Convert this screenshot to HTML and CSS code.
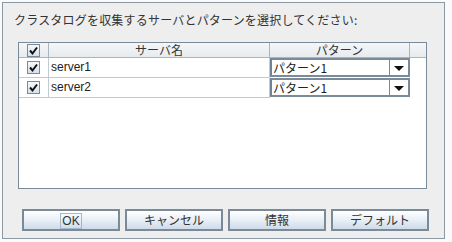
FILE: index.html
```html
<!DOCTYPE html>
<html>
	<head>
		<meta charset="UTF-8">
		<title>クラスタログ収集</title>
		<link rel="stylesheet" href="styles.css">
	</head>
	<body>
		<div class="dialog">
			<p class="prompt">クラスタログを収集するサーバとパターンを選択してください:</p>
			<div class="tableBox">
				<div class="grid">
					<div class="head"><span class="check"><svg viewBox="0 0 11 11"><path d="M2 5.5 L4.5 8.5 L9 2.5" /></svg></span></div>
					<div class="head">サーバ名</div>
					<div class="head">パターン</div>
					<div class="head corner"></div>

					<div class="cell center"><span class="check"><svg viewBox="0 0 11 11"><path d="M2 5.5 L4.5 8.5 L9 2.5" /></svg></span></div>
					<div class="cell">server1</div>
					<div class="cell combo"><span class="comboText">パターン1</span><span class="arrow"></span></div>
					<div class="blank"></div>

					<div class="cell center"><span class="check"><svg viewBox="0 0 11 11"><path d="M2 5.5 L4.5 8.5 L9 2.5" /></svg></span></div>
					<div class="cell">server2</div>
					<div class="cell combo"><span class="comboText">パターン1</span><span class="arrow"></span></div>
					<div class="blank"></div>
				</div>
			</div>
			<div class="buttons">
				<div class="button"><span class="focus">OK</span></div>
				<div class="button">キャンセル</div>
				<div class="button">情報</div>
				<div class="button">デフォルト</div>
			</div>
		</div>
	</body>
</html>
```

FILE: styles.css
```css
body{
	margin: 0;
	background-color: #fafafa;
	font-family: "Noto Sans CJK JP", "Liberation Sans", sans-serif;
	font-size: 12px;
	color: #333333;
}
.dialog{
	margin: 2px 0 0 2px;
	width: 441px;
	height: 235px;
	border: 1px solid #8c98a4;
	background-color: #eeeeee;
	display: flex;
	flex-direction: column;
}
.prompt{
	margin: 9px 0 0 11px;
	height: 16px;
	line-height: 16px;
	font-size: 12px;
	letter-spacing: 0.2px;
	color: #333333;
}
.tableBox{
	margin: 14px 0 0 15px;
	width: 407px;
	height: 145px;
	border: 1px solid #7a8a99;
	background-color: white;
}
.grid{
	display: grid;
	grid-template-columns: 30px 221px 140px 16px;
	grid-template-rows: 15px 20px 20px;
}
.head{
	background: linear-gradient(#f4f6f8, #e8ebee);
	border-right: 1px solid #a9b5c0;
	border-bottom: 1px solid #a9b5c0;
	box-sizing: border-box;
	text-align: center;
	line-height: 14px;
	font-size: 12px;
	color: #333333;
	display: flex;
	justify-content: center;
	align-items: center;
}
.head.corner{
	border-right: none;
}
.cell{
	border-right: 1px solid #c4c9ce;
	border-bottom: 1px solid #c4c9ce;
	box-sizing: border-box;
	padding-left: 2px;
	line-height: 19px;
	font-family: "Liberation Sans", "Noto Sans CJK JP", sans-serif;
	font-size: 12px;
	color: #222222;
}
.center{
	display: flex;
	justify-content: center;
	align-items: center;
	padding: 0;
}
.check{
	width: 11px;
	height: 11px;
	border: 1px solid #7a8a99;
	background: linear-gradient(#f6f9fc, #d4e0ec);
	display: block;
}
.check svg{
	width: 11px;
	height: 11px;
	display: block;
}
.check path{
	fill: none;
	stroke: #111111;
	stroke-width: 2;
}
.combo{
	padding: 0;
	display: flex;
	border: 2px solid #7a8a99;
	border-left-color: #6f8296;
	height: 19px;
	background-color: white;
}
.comboText{
	flex: 1;
	padding-left: 1px;
	line-height: 15px;
	font-family: "Noto Sans CJK JP", sans-serif;
	border-right: 1px solid #7a8a99;
}
.arrow{
	width: 18px;
	position: relative;
}
.arrow::after{
	content: "";
	position: absolute;
	left: 4px;
	top: 6px;
	border-left: 5px solid transparent;
	border-right: 5px solid transparent;
	border-top: 5px solid #111111;
}
.buttons{
	margin: 20px 0 0 19px;
	display: flex;
	gap: 5px;
}
.button{
	width: 94px;
	height: 18px;
	border: 2px solid #7a8a99;
	background: linear-gradient(#ffffff, #e8eff6 50%, #cfdbe8);
	text-align: center;
	line-height: 18px;
	font-size: 12px;
	color: #333333;
}
.focus{
	border: 1px solid #a3b8cc;
	padding: 0 1px;
	font-family: "Liberation Sans", sans-serif;
}
```
